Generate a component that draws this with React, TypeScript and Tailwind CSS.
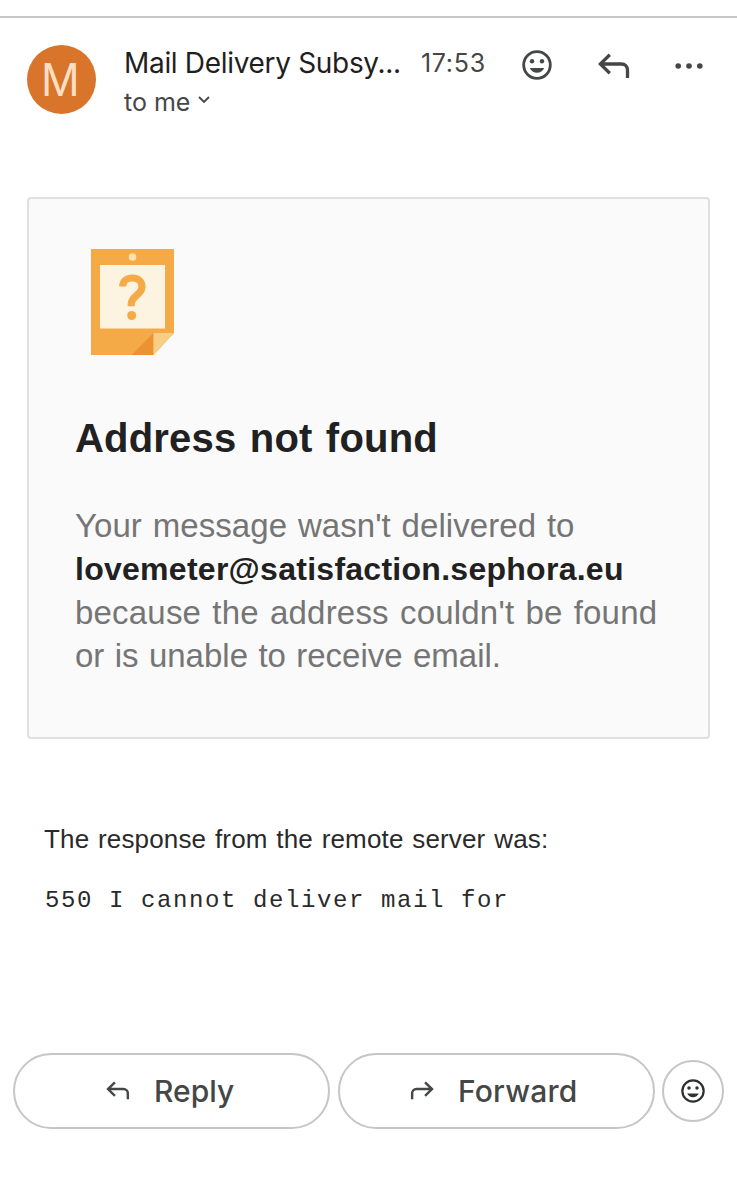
import React from 'react';

const SmileIcon = ({ className }: { className: string }) => (
    <svg viewBox="0 0 30 30" className={className} fill="none">
        <circle cx="15" cy="15" r="13.3" stroke="currentColor" strokeWidth="2.8" />
        <circle cx="10" cy="11.3" r="2.2" fill="currentColor" />
        <circle cx="20" cy="11.3" r="2.2" fill="currentColor" />
        <path d="M7.800 18h14.400c-1.300 3-4 4.700-7.200 4.700s-5.900-1.700-7.200-4.700z" fill="currentColor" />
    </svg>
);

const ReplyIcon = ({ className }: { className: string }) => (
    <svg viewBox="0 0 32 26" className={className} fill="none" stroke="currentColor" strokeWidth="3.300">
        <path d="M11.800 1.800 2.300 11l9.500 9.200M2.500 11H23.500c3.500 0 6 2.500 6 6v8" />
    </svg>
);

const NoteIcon = () => (
    <svg viewBox="0 0 83 106" className="w-[83px] h-[106px]">
        <path d="M0 0h83v84L62.500 106H0z" fill="#f4ab47" />
        <circle cx="41.500" cy="8" r="3.800" fill="#fde0b0" />
        <rect x="9" y="16" width="65" height="63.500" fill="#fdf3e1" />
        <path d="M31.700 37.500C31.700 32 36 29 41.200 29c6 0 9.800 3.300 9.800 8.700 0 8.300-10.800 9.300-10.800 17.300v2.200" fill="none" stroke="#f4ab47" strokeWidth="7.200" />
        <circle cx="40.700" cy="66.500" r="4.500" fill="#f4ab47" />
        <path d="M62.500 84v22H40.500z" fill="#ed9233" />
        <path d="M62.500 84H83L62.500 106z" fill="#f8cd84" />
    </svg>
);

const Header = () => (
    <header className="flex h-[179px] items-start pt-[27px] pl-[27px] text-[#444746] font-['Inter',sans-serif]">
        <div className="flex size-[69px] shrink-0 items-center justify-center rounded-full bg-[#d9742b] text-[#fbdfc1] text-[45px] leading-none">
            <span className="-translate-x-px scale-x-95">M</span>
        </div>
        <div className="ml-[28px] w-[297px] shrink-0 whitespace-nowrap">
            <div className="h-[38px] text-[28px] leading-[37px] tracking-[-0.320px] text-[#1f1f1f]">Mail Delivery Subsy...</div>
            <div className="flex h-[38px] items-center text-[25px] leading-[38px]">
                to me
                <svg viewBox="0 0 12 8" className="ml-2 mb-1 h-2 w-3" fill="none" stroke="currentColor" strokeWidth="1.800">
                    <path d="M1 1l5 5 5-5" />
                </svg>
            </div>
        </div>
        <div className="w-[101px] shrink-0 text-[25px] leading-[37px] tracking-[0.700px]">17:53</div>
        <SmileIcon className="mt-[5px] size-[30px] shrink-0" />
        <ReplyIcon className="mt-[8px] ml-[46px] h-[26px] w-[32px] shrink-0" />
        <svg viewBox="0 0 28 6" className="mt-[18px] ml-[45px] h-[6px] w-[28px] shrink-0" fill="currentColor">
            <circle cx="3.200" cy="3" r="2.800" />
            <circle cx="14" cy="3" r="2.800" />
            <circle cx="24.800" cy="3" r="2.800" />
        </svg>
    </header>
);

const Bounce = () => (
    <section className="mx-[27px] h-[542px] rounded-[4px] border-2 border-[#e0e0e0] bg-[#fafafa] pt-[50px] pl-[46px] font-['Liberation_Sans',Arial,sans-serif]">
        <div className="ml-[16px]">
            <NoteIcon />
        </div>
        <h1 className="mt-[60px] text-[40px] leading-[46px] font-bold tracking-[0.200px] [word-spacing:2px] whitespace-nowrap text-[#212121]">Address not found</h1>
        <p className="mt-[43px] text-[33px] leading-[43px] whitespace-nowrap text-[#757575]">
            <span className="tracking-[0.060px] [word-spacing:1.600px]">Your message wasn't delivered to</span><br />
            <b className="text-[32px] tracking-[0.270px] text-[#212121]">lovemeter@satisfaction.sephora.eu</b><br />
            <span className="tracking-[0.200px] [word-spacing:1.800px]">because the address couldn't be found</span><br />
            <span className="[word-spacing:1.200px]">or is unable to receive email.</span>
        </p>
    </section>
);

const App = () => {
    return (
        <main className="h-[1200px] w-[737px] overflow-hidden bg-white pt-[16px]">
            <div className="h-[2px] bg-[#c7c7c7]" />
            <Header />
            <Bounce />
            <div className="h-[314px] pt-[83px] pl-[44px] whitespace-nowrap text-[#2a2a2a]">
                <p className="text-[26px] leading-[34px] tracking-[0.150px] [word-spacing:1.400px] font-['Liberation_Sans',Arial,sans-serif]">The response from the remote server was:</p>
                <p className="mt-[28px] ml-px text-[24px] leading-[34px] tracking-[1.600px] font-['Liberation_Mono',monospace]">550 I cannot deliver mail for</p>
            </div>
            <footer className="flex items-center pl-[13px] text-[#444746] font-['Inter',sans-serif]">
                <button className="flex h-[76px] w-[317px] items-center rounded-full border-2 border-[#c4c7c5] pl-[91px]">
                    <ReplyIcon className="mb-[2px] h-[19px] w-[24px]" />
                    <span className="ml-[24px] text-[30px] font-medium">Reply</span>
                </button>
                <button className="ml-[8px] flex h-[76px] w-[317px] items-center rounded-full border-2 border-[#c4c7c5] pl-[70px]">
                    <ReplyIcon className="mb-[2px] h-[19px] w-[24px] -scale-x-100" />
                    <span className="ml-[24px] text-[30px] font-medium tracking-[0.200px]">Forward</span>
                </button>
                <button className="ml-[7px] flex size-[62px] items-center justify-center rounded-full border-2 border-[#c4c7c5] text-[#2f3130]">
                    <SmileIcon className="size-[24px]" />
                </button>
            </footer>
        </main>
    );
}

export default App;
